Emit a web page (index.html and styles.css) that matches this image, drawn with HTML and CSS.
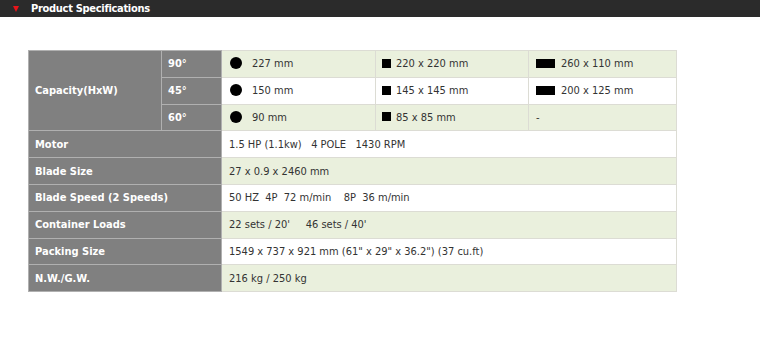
FILE: index.html
```html
<!DOCTYPE html>
<html>
<head>
<meta charset="utf-8">
<link rel="stylesheet" href="styles.css">
</head>
<body>
<div class="bar"><span class="tri"></span><span class="bar-title">Product Specifications</span></div>
<table class="spec">
  <colgroup>
    <col class="c1"><col class="c2"><col class="c3"><col class="c4"><col class="c5">
  </colgroup>
  <tr class="alt">
    <th rowspan="3">Capacity(HxW)</th>
    <th class="sub">90°</th>
    <td><span class="ic circle"></span>227 mm</td>
    <td><span class="ic sq"></span>220 x 220 mm</td>
    <td><span class="ic rect"></span>260 x 110 mm</td>
  </tr>
  <tr>
    <th class="sub">45°</th>
    <td><span class="ic circle"></span>150 mm</td>
    <td><span class="ic sq"></span>145 x 145 mm</td>
    <td><span class="ic rect"></span>200 x 125 mm</td>
  </tr>
  <tr class="alt">
    <th class="sub">60°</th>
    <td><span class="ic circle"></span>90 mm</td>
    <td><span class="ic sq"></span>85 x 85 mm</td>
    <td>-</td>
  </tr>
  <tr>
    <th colspan="2">Motor</th>
    <td colspan="3">1.5 HP (1.1kw)&nbsp;&nbsp; 4 POLE&nbsp;&nbsp; 1430 RPM</td>
  </tr>
  <tr class="alt">
    <th colspan="2">Blade Size</th>
    <td colspan="3">27 x 0.9 x 2460 mm</td>
  </tr>
  <tr>
    <th colspan="2">Blade Speed (2 Speeds)</th>
    <td colspan="3">50 HZ&nbsp; 4P&nbsp; 72 m/min&nbsp;&nbsp;&nbsp; 8P&nbsp; 36 m/min</td>
  </tr>
  <tr class="alt">
    <th colspan="2">Container Loads</th>
    <td colspan="3">22 sets / 20'&nbsp;&nbsp;&nbsp;&nbsp; 46 sets / 40'</td>
  </tr>
  <tr>
    <th colspan="2">Packing Size</th>
    <td colspan="3">1549 x 737 x 921 mm (61" x 29" x 36.2") (37 cu.ft)</td>
  </tr>
  <tr class="alt">
    <th colspan="2">N.W./G.W.</th>
    <td colspan="3">216 kg / 250 kg</td>
  </tr>
</table>
</body>
</html>
```
FILE: styles.css
```css
html, body {
  margin: 0;
  padding: 0;
  background: #ffffff;
}
body {
  font-family: "DejaVu Sans Condensed", "DejaVu Sans", sans-serif;
  font-size: 11px;
  color: #333333;
}
.bar {
  height: 17px;
  background: #2b2b2b;
  display: flex;
  align-items: center;
}
.tri {
  width: 0;
  height: 0;
  margin-left: 13px;
  border-left: 3.5px solid transparent;
  border-right: 3.5px solid transparent;
  border-top: 6px solid #e8141a;
  margin-top: 1px;
}
.bar-title {
  margin-left: 12px;
  color: #ffffff;
  font-family: "DejaVu Sans Condensed", "DejaVu Sans", sans-serif;
  font-weight: bold;
  font-size: 11px;
  letter-spacing: -0.3px;
}
.spec {
  margin: 33px 0 0 28px;
  border-collapse: collapse;
  table-layout: fixed;
  width: 648px;
}
.c1 { width: 133px; }
.c2 { width: 60px; }
.c3 { width: 154px; }
.c4 { width: 153px; }
.c5 { width: 148px; }
.spec th, .spec td {
  height: 25.8px;
  padding: 0 6px;
  text-align: left;
  white-space: nowrap;
}
.spec th {
  background: #808080;
  color: #ffffff;
  font-weight: bold;
  border: 1px solid #b0b0b0;
}
.spec td {
  background: #ffffff;
  border: 1px solid #dcdcd4;
  padding-left: 7px;
}
.spec tr.alt td {
  background: #eaf0dd;
}
.ic {
  display: inline-block;
  background: #000000;
  vertical-align: middle;
  margin-right: 10px;
  position: relative;
  top: -1px;
}
.circle {
  width: 12px;
  height: 12px;
  border-radius: 50%;
  margin-left: 1px;
}
.sq {
  width: 9px;
  height: 9px;
  margin-left: -1px;
  margin-right: 5px;
}
.rect {
  width: 19px;
  height: 9px;
  margin-right: 6px;
}
```
